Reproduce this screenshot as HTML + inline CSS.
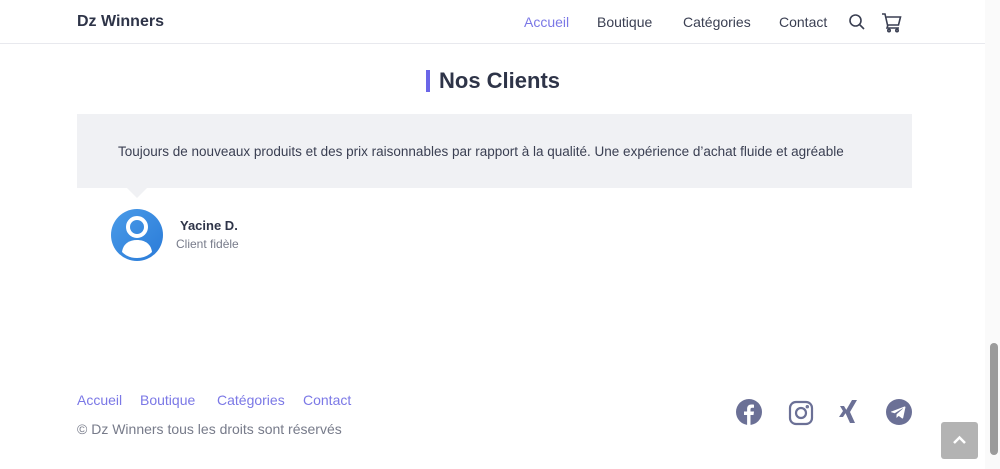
<!DOCTYPE html>
<html><head><meta charset="utf-8"><style>
*{margin:0;padding:0;box-sizing:border-box}
body{width:1000px;height:469px;background:#fff;font-family:"Liberation Sans",sans-serif;position:relative;overflow:hidden;color:#2e3448}
.a{position:absolute;white-space:nowrap}
.nav{font-size:14px;color:#3a3f52;top:14px}
.ft{font-size:14px;color:#7b78e6;top:392px}
</style></head><body>
<div class="a" style="left:0;top:0;width:985px;height:44px;border-bottom:1px solid #e8e9ee"></div>
<div class="a" style="left:77px;top:13px;font-size:16px;font-weight:bold;color:#2e3448">Dz Winners</div>
<div class="a nav" style="left:524px;color:#7b78e6">Accueil</div>
<div class="a nav" style="left:597px">Boutique</div>
<div class="a nav" style="left:683px">Catégories</div>
<div class="a nav" style="left:779px">Contact</div>
<svg class="a" style="left:848px;top:13px" width="18" height="18" viewBox="0 0 18 18" fill="none" stroke="#3a3f52" stroke-width="1.6"><circle cx="7.5" cy="7.5" r="5.5"/><path d="M11.5 11.5l4.5 4.5"/></svg>
<svg class="a" style="left:881px;top:11px" width="22" height="22" viewBox="0 0 22 22" fill="none" stroke="#3a3f52" stroke-width="1.6"><path d="M1 3h3l2.5 11h11l2-8H5.5"/><path d="M7 14l-1 3h12"/><circle cx="8" cy="19.5" r="1.2"/><circle cx="16" cy="19.5" r="1.2"/></svg>
<div class="a" style="left:426px;top:70px;width:4px;height:22px;background:#6b66e8"></div>
<div class="a" style="left:439px;top:68px;font-size:22px;font-weight:bold;color:#2e3448">Nos Clients</div>
<div class="a" style="left:77px;top:114px;width:835px;height:74px;background:#f0f1f4"></div>
<div class="a" style="left:127px;top:188px;width:0;height:0;border-left:10px solid transparent;border-right:10px solid transparent;border-top:10px solid #f0f1f4"></div>
<div class="a" style="left:118px;top:144px;font-size:13.5px;color:#3a3f52">Toujours de nouveaux produits et des prix raisonnables par rapport à la qualité. Une expérience d’achat fluide et agréable</div>
<svg class="a" style="left:110px;top:208px" width="54" height="54" viewBox="0 0 54 54"><defs><linearGradient id="g" x1="0" y1="0" x2="1" y2="1"><stop offset="0" stop-color="#4a9be8"/><stop offset="1" stop-color="#2a7bd8"/></linearGradient><clipPath id="c"><circle cx="27" cy="27" r="26"/></clipPath></defs><circle cx="27" cy="27" r="26" fill="url(#g)"/><circle cx="27" cy="19" r="9" fill="none" stroke="#fff" stroke-width="4"/><path d="M12 44c1-8 7-12 15-12s14 4 15 12c-4 4-9 6-15 6s-11-2-15-6z" fill="#fff"/></svg>
<div class="a" style="left:180px;top:218px;font-size:13px;font-weight:bold;color:#2e3448">Yacine D.</div>
<div class="a" style="left:176px;top:237px;font-size:12px;color:#777b8a">Client fidèle</div>
<div class="a ft" style="left:77px">Accueil</div>
<div class="a ft" style="left:140px">Boutique</div>
<div class="a ft" style="left:217px">Catégories</div>
<div class="a ft" style="left:303px">Contact</div>
<div class="a" style="left:77px;top:421px;font-size:14px;color:#777b8a">© Dz Winners tous les droits sont réservés</div>
<svg class="a" style="left:736px;top:399px" width="26" height="26" viewBox="0 0 26 26"><circle cx="13" cy="13" r="13" fill="#6b7096"/><path d="M14.5 26V16h3l.5-3.5h-3.5v-2c0-1 .4-1.7 1.8-1.7H18V5.7c-.4-.1-1.5-.2-2.6-.2-2.6 0-4.3 1.6-4.3 4.4v2.6H8V16h3.1v10z" fill="#fff"/></svg>
<svg class="a" style="left:788px;top:400px" width="26" height="26" viewBox="0 0 26 26" fill="none" stroke="#6b7096" stroke-width="2.2"><rect x="2" y="2" width="22" height="22" rx="6"/><circle cx="13" cy="13" r="5"/><circle cx="19.3" cy="6.7" r=".6" fill="#6b7096"/></svg>
<svg class="a" style="left:838px;top:399px" width="22" height="26" viewBox="0 0 22 26" fill="#6b7096"><path d="M2 7h4l3 5-4 6H1l4-6z"/><path d="M14 1h5l-7 12 5 11h-5l-5-11z"/></svg>
<svg class="a" style="left:886px;top:399px" width="26" height="26" viewBox="0 0 26 26"><circle cx="13" cy="13" r="13" fill="#6b7096"/><path d="M5.5 12.5l13-5c.6-.2 1.1.1.9 1l-2.2 10.3c-.2.7-.6.9-1.2.6l-3.3-2.5-1.6 1.5c-.2.2-.3.3-.7.3l.2-3.4 6.2-5.6c.3-.2-.1-.4-.4-.2l-7.7 4.8-3.3-1c-.7-.2-.7-.7.1-.8z" fill="#fff"/></svg>
<div class="a" style="left:941px;top:422px;width:37px;height:37px;background:#b3b3b3;border-radius:3px"></div>
<svg class="a" style="left:951px;top:432px" width="17" height="17" viewBox="0 0 17 17" fill="none" stroke="#fff" stroke-width="2.5"><path d="M3 11l5.5-5.5L14 11"/></svg>
<div class="a" style="left:985px;top:0;width:15px;height:469px;background:#fafafa"></div>
<div class="a" style="left:990px;top:343px;width:8px;height:112px;background:#9b9b9b;border-radius:4px"></div>
</body></html>
